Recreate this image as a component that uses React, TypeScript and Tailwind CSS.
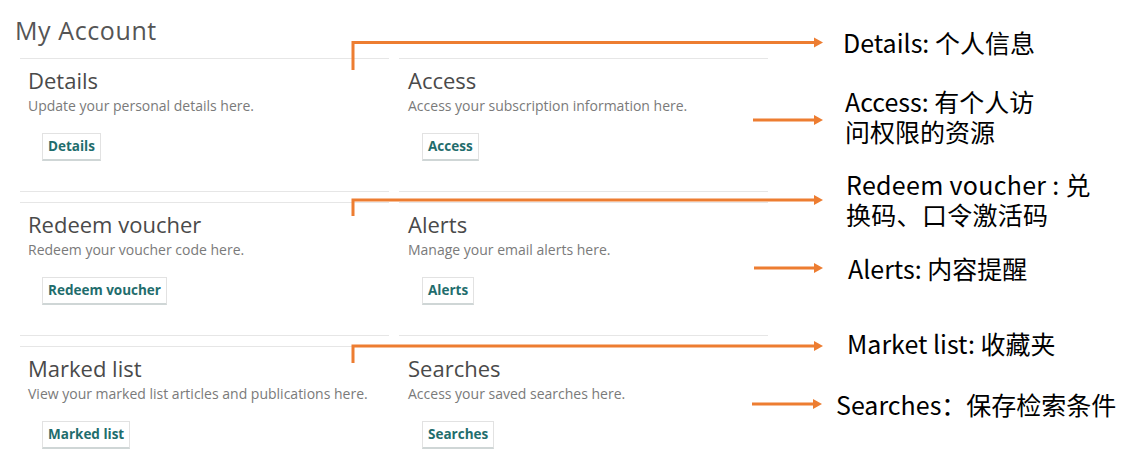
import React from "react";

const cards = [
  { title: "Details", desc: "Update your personal details here.", btn: "Details" },
  { title: "Access", desc: "Access your subscription information here.", btn: "Access" },
  { title: "Redeem voucher", desc: "Redeem your voucher code here.", btn: "Redeem voucher" },
  { title: "Alerts", desc: "Manage your email alerts here.", btn: "Alerts" },
  { title: "Marked list", desc: "View your marked list articles and publications here.", btn: "Marked list" },
  { title: "Searches", desc: "Access your saved searches here.", btn: "Searches" },
];

function Card({ title, desc, btn, right }: { title: string; desc: string; btn: string; right: boolean }) {
  return (
    <div className={`h-[134px] border-t border-b border-[#e6e6e6] ${right ? "pl-[9px]" : "pl-[8px]"} pt-[7px] flex flex-col items-start`}>
      <div className="text-[22px] leading-[28px] text-[#4a4a4a]">{title}</div>
      <div className="text-[14px] leading-[18px] text-[#7a7a7a] mt-[3px]">{desc}</div>
      <div className="mt-[18px] ml-[14px] border border-[#e2e2e2] border-b-2 border-b-[#cfd6d6] px-[5px] py-[3px] text-[13.5px] leading-[19px] font-bold text-[#1f6d6d] bg-white">
        {btn}
      </div>
    </div>
  );
}

function Annotations() {
  const orange = "#ED7D31";
  const head = (x: number, y: number) => (
    <polygon points={`${x - 9},${y - 5} ${x},${y} ${x - 9},${y + 5}`} fill={orange} />
  );
  return (
    <>
      <svg className="absolute left-0 top-0 pointer-events-none" width={1133} height={468}>
        <g stroke={orange} strokeWidth={3} fill="none">
          <path d="M353 70 V42.5 H815" />
          <path d="M353 216 V200 H815" />
          <path d="M353 363 V346 H815" />
          <path d="M753 120 H815" />
          <path d="M754 268 H815" />
          <path d="M752 404 H814" />
        </g>
        {head(823, 42.5)}
        {head(823, 200)}
        {head(823, 346)}
        {head(823, 120)}
        {head(823, 268)}
        {head(822, 404)}
      </svg>
      <div className="absolute left-[843px] top-[27px] text-[25px] leading-[30px] text-black whitespace-nowrap">Details: 个人信息</div>
      <div className="absolute left-[845px] top-[86px] text-[25px] leading-[30px] text-black whitespace-nowrap">
        <div>Access: 有个人访</div>
        <div>问权限的资源</div>
      </div>
      <div className="absolute left-[846px] top-[169px] text-[25px] leading-[30px] text-black whitespace-nowrap tracking-[0.3px]">
        <div>Redeem voucher : 兑</div>
        <div>换码、口令激活码</div>
      </div>
      <div className="absolute left-[848px] top-[253px] text-[25px] leading-[30px] text-black whitespace-nowrap">Alerts: 内容提醒</div>
      <div className="absolute left-[847px] top-[328px] text-[25px] leading-[30px] text-black whitespace-nowrap">Market list: 收藏夹</div>
      <div className="absolute left-[836px] top-[389px] text-[25px] leading-[30px] text-black whitespace-nowrap">Searches：保存检索条件</div>
    </>
  );
}

export default function App() {
  return (
    <div
      className="relative w-[1133px] h-[468px] bg-white overflow-hidden"
      style={{ fontFamily: "'Open Sans', 'Noto Sans', sans-serif" }}
    >
      <div className="pl-[15px] pt-[14px] text-[25px] leading-[32px] tracking-[0.6px] text-[#555]">My Account</div>
      <div className="ml-[20px] mt-[12px] w-[748px] grid grid-cols-2 gap-x-[10px] gap-y-[10px]">
        {cards.map((c, i) => (
          <Card key={c.title} {...c} right={i % 2 === 1} />
        ))}
      </div>
      <div style={{ fontFamily: "'Noto Sans CJK SC', 'Noto Sans', sans-serif" }}>
        <Annotations />
      </div>
    </div>
  );
}
